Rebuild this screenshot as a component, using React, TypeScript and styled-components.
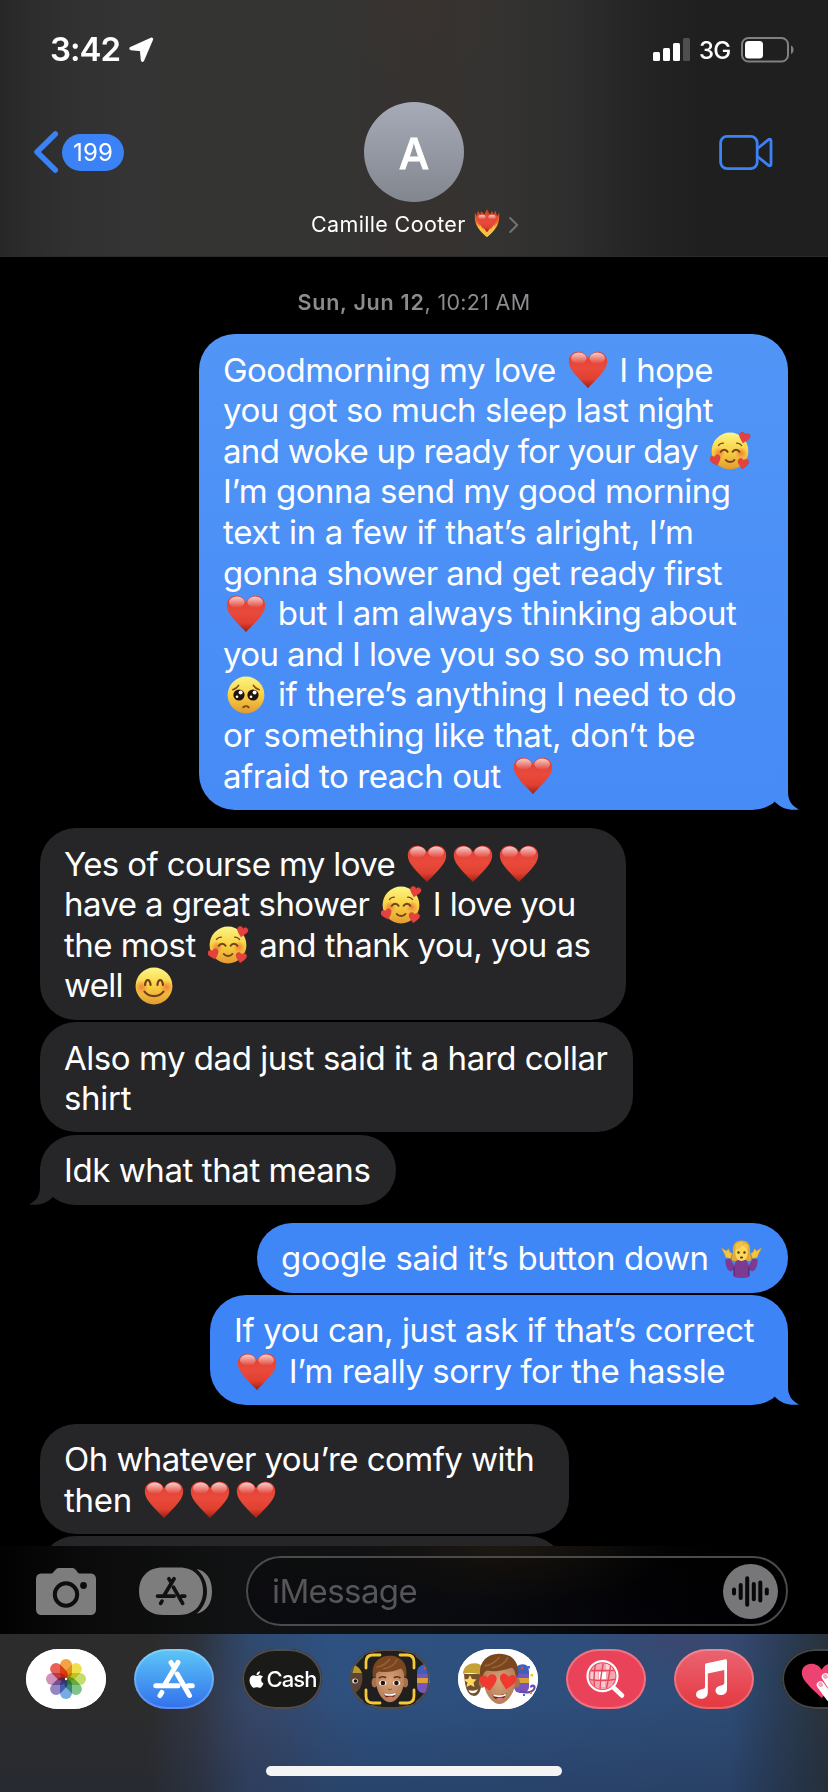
import React from 'react';
import styled, { createGlobalStyle } from 'styled-components';
import { FaApple } from 'react-icons/fa';

const GlobalStyle = createGlobalStyle`
  * { box-sizing: border-box; }
  html, body { margin: 0; padding: 0; background: #000; }
  body { font-family: Inter, "Liberation Sans", sans-serif; color: #fff; }
  svg { display: block; flex: none; }
`;

const Screen = styled.div`
  width: 828px;
  height: 1792px;
  overflow: hidden;
  display: flex;
  flex-direction: column;
  background: #000;
`;

/* ---------- header ---------- */

const Header = styled.header`
  height: 257px;
  flex: none;
  border-bottom: 1px solid #2a2a2a;
  background:
    radial-gradient(ellipse 110px 90px at 420px 0, rgba(64, 50, 46, 0.25), transparent),
    linear-gradient(90deg, #272727 0, #2c2c2c 28px, #313131 70px, #343434 130px, #343433 340px, #363230 420px, #343331 500px, #2e2e2e 570px, #242424 640px, #1f1f1f 700px, #1f1f1f 100%);
`;

const StatusBar = styled.div`
  height: 100px;
  padding: 0 34px 0 50px;
  display: flex;
  justify-content: space-between;
`;

const StatusLeft = styled.div`
  display: flex;
  padding-top: 29px;
  height: 71px;
`;

const Clock = styled.span`
  width: 79px;
  font-size: 33px;
  line-height: 41px;
  font-weight: 600;
  letter-spacing: -1px;
  white-space: nowrap;
`;

const ArrowWrap = styled.span`
  padding-top: 8px;
`;

const StatusRight = styled.div`
  display: flex;
  align-items: flex-start;
  padding-top: 37px;
`;

const Network = styled.span`
  width: 50px;
  padding-left: 8px;
  font-size: 24px;
  line-height: 27px;
  font-weight: 500;
  letter-spacing: -0.7px;
  white-space: nowrap;
`;

const NavRow = styled.div`
  height: 104px;
  padding: 0 55px 0 33px;
  display: flex;
  justify-content: space-between;
  align-items: flex-start;
`;

const Back = styled.div`
  width: 331px;
  display: flex;
  padding-top: 30px;
  gap: 3px;
`;

const Badge = styled.span`
  width: 62px;
  height: 37px;
  margin-top: 4px;
  border-radius: 19px;
  background: #3b82f7;
  font-size: 24px;
  line-height: 38px;
  letter-spacing: 0.1px;
  text-align: center;
`;

const Avatar = styled.div`
  width: 100px;
  height: 100px;
  margin-top: 2px;
  border-radius: 50%;
  background: linear-gradient(#a7abb8, #82868e);
  font-size: 43px;
  font-weight: 500;
  line-height: 103px;
  text-align: center;
  -webkit-text-stroke: 0.8px #fff;
`;

const Video = styled.div`
  width: 309px;
  display: flex;
  justify-content: flex-end;
  padding-top: 34px;
`;

const NameRow = styled.div`
  display: flex;
  justify-content: center;
  height: 44px;
  padding: 5px 0 0 2px;
`;

const Name = styled.span`
  width: 163px;
  font-size: 21.5px;
  line-height: 30px;
  letter-spacing: 0.35px;
  white-space: nowrap;
`;

const ChevronWrap = styled.span`
  padding: 8px 0 0 9px;
`;

/* ---------- conversation ---------- */

const Conversation = styled.main`
  height: 1289px;
  flex: none;
  overflow: hidden;
  display: flex;
  flex-direction: column;
  padding: 0 40px;
`;

const Stamp = styled.div`
  height: 59px;
  margin-bottom: 18px;
  padding-top: 29px;
  flex: none;
  text-align: center;
  color: #8b8b90;
  font-size: 21.5px;
  line-height: 32px;
  letter-spacing: 0.3px;
`;

const StampDay = styled.span`
  font-weight: 600;
  letter-spacing: 0.75px;
`;

type Side = 'sent' | 'received';

const Bubble = styled.div<{ $side: Side; $width: number; $gap: number; $fill: string }>`
  position: relative;
  flex: none;
  width: ${(p) => p.$width}px;
  margin-bottom: ${(p) => p.$gap}px;
  align-self: ${(p) => (p.$side === 'sent' ? 'flex-end' : 'flex-start')};
  padding: 15.7px 0 13.7px 25px;
  border-radius: 36px;
  background: ${(p) => p.$fill};
`;

const Line = styled.div<{ $tracking: number }>`
  height: 40.6px;
  font-size: 33px;
  line-height: 40.6px;
  letter-spacing: ${(p) => p.$tracking}px;
  white-space: pre;
  margin-left: -1px;
`;

const InlineEmoji = styled.span`
  display: inline-block;
  width: 46px;
  height: 38px;
  padding-left: 3px;
  vertical-align: -7.5px;
`;

const TailSvg = styled.svg<{ $side: Side }>`
  position: absolute;
  bottom: 0;
  ${(p) => (p.$side === 'sent' ? 'right: -11px;' : 'left: -11px; transform: scaleX(-1);')}
`;

/* ---------- composer ---------- */

const Composer = styled.div`
  height: 88px;
  flex: none;
  display: flex;
  align-items: flex-start;
  padding: 10px 40px 0 36px;
  background:
    radial-gradient(ellipse 160px 60px at 510px 0, rgba(40, 30, 16, 0.6), transparent),
    linear-gradient(90deg, #020202 0, #0b0b0b 90px, #111213 240px, #0e0f12 480px, #030304 640px, #000 740px);
`;

const CameraWrap = styled.div`
  padding-top: 11px;
  width: 103px;
`;

const AppsWrap = styled.div`
  padding-top: 11px;
  width: 107px;
`;

const Field = styled.div`
  flex: 1;
  height: 70px;
  border: 2px solid #4b4b4e;
  border-radius: 35px;
  display: flex;
  justify-content: space-between;
  padding: 6px 8px 0 24px;
  background: linear-gradient(rgba(0, 0, 0, 0.25), rgba(0, 2, 12, 0.4));
`;

const Placeholder = styled.span`
  font-size: 33px;
  line-height: 55px;
  letter-spacing: -0.6px;
  color: #56565a;
`;

/* ---------- app drawer ---------- */

const Drawer = styled.div`
  height: 158px;
  flex: none;
  overflow: hidden;
  display: flex;
  flex-direction: column;
  align-items: center;
  background:
    linear-gradient(180deg, transparent 40%, rgba(28, 38, 60, 0.3) 100%),
    radial-gradient(ellipse 110px 130px at 255px 110px, rgba(66, 66, 92, 0.5), transparent),
    radial-gradient(ellipse 110px 60px at 690px 0, rgba(72, 66, 100, 0.5), transparent),
    linear-gradient(90deg, #2c2c2c 0, #2c2c2c 150px, #2c333d 200px, #2e4a70 250px, #2d5181 330px, #2e4f7d 540px, #2e4c77 730px, #2a3e59 775px, #29323a 828px);
`;

const AppStrip = styled.div`
  width: 100%;
  height: 132px;
  padding: 15px 0 0 26px;
  display: flex;
  gap: 28px;
`;

const AppPill = styled.div<{ $fill: string; $edge: string }>`
  width: 80px;
  height: 60px;
  flex: none;
  overflow: hidden;
  border-radius: 33px / 30px;
  background: ${(p) => p.$fill};
  box-shadow: inset 0 0 0 2px ${(p) => p.$edge};
`;

const CashLabel = styled.div`
  height: 60px;
  display: flex;
  align-items: center;
  justify-content: center;
  font-size: 22px;
  font-weight: 500;
  letter-spacing: -0.9px;
`;

const HomeIndicator = styled.div`
  width: 296px;
  height: 10px;
  border-radius: 5px;
  background: #f4f4f4;
`;

/* ---------- emoji artwork, 40 x 38 ---------- */

const HEART = 'M20 37.2C17.5 34.2 10 27.5 5 20.8C2 16.8.8 13.6.8 10.3C.8 4.6 4.9.7 10.1.7C14.5.7 18 3 20 7.2C22 3 25.5.7 29.9.7C35.1.7 39.2 4.6 39.2 10.3C39.2 13.6 38 16.8 35 20.8C30 27.5 22.5 34.2 20 37.2Z';

const Defs = () => (
  <svg width="0" height="0" aria-hidden style={{ position: 'absolute' }}>
    <defs>
      <linearGradient id="heartFill" x1="0" y1="0" x2="0" y2="1">
        <stop offset="0" stopColor="#dd3f34" />
        <stop offset=".45" stopColor="#ea4a3b" />
        <stop offset=".75" stopColor="#e0402f" />
        <stop offset="1" stopColor="#9c1f14" />
      </linearGradient>
      <linearGradient id="heartShine" x1="0" y1="0" x2="0" y2="1">
        <stop offset="0" stopColor="#fff" stopOpacity=".75" />
        <stop offset="1" stopColor="#fff" stopOpacity="0" />
      </linearGradient>
      <linearGradient id="faceFill" x1="0" y1="0" x2="0" y2="1">
        <stop offset="0" stopColor="#fdf584" />
        <stop offset=".5" stopColor="#f9d143" />
        <stop offset="1" stopColor="#e39a30" />
      </linearGradient>
      <radialGradient id="blush">
        <stop offset="0" stopColor="#f0703a" stopOpacity=".8" />
        <stop offset="1" stopColor="#f0703a" stopOpacity="0" />
      </radialGradient>
      <linearGradient id="flame" x1="0" y1="0" x2="0" y2="1">
        <stop offset="0" stopColor="#c93a1c" />
        <stop offset=".45" stopColor="#ea6a28" />
        <stop offset=".8" stopColor="#f9b840" />
        <stop offset="1" stopColor="#fde06a" />
      </linearGradient>
      <radialGradient id="skin" cx=".5" cy=".45" r=".6">
        <stop offset="0" stopColor="#d8a27a" />
        <stop offset="1" stopColor="#b07a54" />
      </radialGradient>
    </defs>
  </svg>
);

const Heart = () => (
  <svg width="40" height="38" viewBox="0 0 40 38">
    <path d={HEART} fill="url(#heartFill)" />
    <ellipse cx="10.8" cy="7.2" rx="7.8" ry="5.6" fill="url(#heartShine)" />
    <ellipse cx="29.2" cy="7.2" rx="7.8" ry="5.6" fill="url(#heartShine)" />
  </svg>
);

const MiniHeart = ({ x, y, r }: { x: number; y: number; r: number }) => (
  <path d={HEART} fill="#e5423f" stroke="#c2302a" strokeWidth="1.2" transform={`translate(${x} ${y}) rotate(${r}) scale(.28) translate(-20 -19)`} />
);

const LovingFace = () => (
  <svg width="42" height="38" viewBox="0 0 42 38">
    <circle cx="20" cy="19" r="18.4" fill="url(#faceFill)" />
    <circle cx="9" cy="21" r="6" fill="url(#blush)" />
    <circle cx="31" cy="21" r="6" fill="url(#blush)" />
    <g fill="none" stroke="#71421a" strokeWidth="2" strokeLinecap="round">
      <path d="M10.8 19.8C12.4 17 16 17 17.6 19.8M22.6 19.8C24.2 17 27.8 17 29.4 19.8" />
      <path d="M15.8 28C17.8 30.6 22.4 30.6 24.4 28" />
      <path d="M8.5 13.4C9.6 12 11.4 11 13.2 11.2M26.8 11.2C28.6 11 30.4 12 31.5 13.4" strokeWidth="1.4" />
    </g>
    <MiniHeart x={34.2} y={6} r={14} />
    <MiniHeart x={5.6} y={28.5} r={-18} />
    <MiniHeart x={33} y={32} r={10} />
  </svg>
);

const PleadingFace = () => (
  <svg width="40" height="38" viewBox="0 0 40 38">
    <circle cx="20" cy="19" r="18.4" fill="url(#faceFill)" />
    <g fill="none" stroke="#7b4a1c" strokeWidth="1.6" strokeLinecap="round">
      <path d="M6.8 13.8C9.2 13 11.4 11.4 12.6 9.4M33.2 13.8C30.8 13 28.6 11.4 27.4 9.4" />
      <path d="M17.3 31.3C18.8 29.8 21.2 29.8 22.7 31.3" strokeWidth="2" />
    </g>
    <circle cx="13" cy="19" r="5.6" fill="#20130d" />
    <circle cx="27" cy="19" r="5.6" fill="#20130d" />
    <g fill="#fff">
      <circle cx="14.6" cy="16.6" r="2" />
      <circle cx="11" cy="20.8" r="1.3" />
      <circle cx="28.6" cy="16.6" r="2" />
      <circle cx="25" cy="20.8" r="1.3" />
    </g>
  </svg>
);

const SmileFace = () => (
  <svg width="40" height="38" viewBox="0 0 40 38">
    <circle cx="20" cy="19" r="18.4" fill="url(#faceFill)" />
    <circle cx="7.5" cy="20" r="7" fill="url(#blush)" />
    <circle cx="32.5" cy="20" r="7" fill="url(#blush)" />
    <g fill="none" stroke="#71421a" strokeWidth="2.2" strokeLinecap="round">
      <path d="M11 18C11.8 11.4 15.8 11.4 16.6 18M23.4 18C24.2 11.4 28.2 11.4 29 18" />
      <path d="M10.5 24.6C15 30.5 25 30.5 29.5 24.6" />
    </g>
  </svg>
);

const Shrug = () => (
  <svg width="41" height="38" viewBox="0 0 44 38" preserveAspectRatio="none">
    <path d="M4.5 19.5L10 18.5L14 25.5L17 19.5H27L30 25.5L34 18.5L39.500 19.5C39 26 37.5 30.5 33.5 31.5L30 29.5V37C25 38.5 19 38.5 14 37V29.5L10.5 31.5C6.5 30.5 5 26 4.5 19.5Z" fill="#7d3a93" />
    <path d="M14 36V27M30 36V27" stroke="#572569" strokeWidth="1.2" />
    <path d="M.5 8L6 11L8 8.5L9.5 12L12 13.5L10.5 18.5L5 17.5C4.500 14 2 11.5 .5 8ZM43.5 8L38 11L36 8.5L34.5 12L32 13.5L33.5 18.5L39 17.5C39.5 14 42 11.5 43.5 8Z" fill="#f5c63c" stroke="#c98d25" strokeWidth=".5" />
    <path d="M22 .5C15 .5 12.500 5 12.800 10.500C12.800 15 10.800 17.500 11.500 20C13 22 17 21 18 20H27C29 22 32 21 32.500 19.500C33 17 31 15 31.200 10.500C31.500 5 29 .5 22 .5Z" fill="#e3a933" />
    <path d="M22 4.500C17.500 7 15.500 8.500 15.300 12C15.500 17.500 18 21 22 21S28.500 17.500 28.700 12C28.500 8.500 26.500 6 22 4.500Z" fill="#fbd75b" />
    <path d="M15.500 10C20 9 23 6.500 23.500 3.500C25 7 27 9 29 10L29 5L22 1.500L15.500 4Z" fill="#f2c249" />
    <g fill="#51301a">
      <circle cx="18.8" cy="12.5" r="1.300" />
      <circle cx="25.2" cy="12.500" r="1.300" />
      <ellipse cx="22" cy="17.500" rx="1.700" ry="1.100" />
    </g>
  </svg>
);

const HeartOnFire = () => (
  <svg width="26" height="28" viewBox="0 0 26 28">
    <path d="M13 28C8 24 2.500 18.500 1.200 12.500C.4 9 1.300 7.500 .6 4C2 5 2.300 6 2.800 7C3.600 5.500 2.800 3.500 4.200 1.500C4.700 3.500 5.500 4.500 6.200 5.200C7 4.500 6.500 3 7.200 2C8 3.500 9.500 4 10.200 5.500C11.500 4 11.500 2 13.200 0C13.500 2.200 15 3.500 15.800 5.500C17 4.500 17.200 3 17.800 2C18.800 3 18.800 4.200 19.500 5.200C20.500 4.500 20.500 3 21.300 1.500C22.500 3.500 22.200 5.500 23.200 7C24 6 24.300 5 25.500 4C24.800 7.500 25.600 9 24.800 12.500C23.500 18.500 18 24 13 28Z" fill="url(#flame)" />
    <path d={HEART} fill="url(#heartFill)" transform="translate(2.600 4.600) scale(.52 .5)" />
    <ellipse cx="8" cy="8.200" rx="3.600" ry="2.400" fill="url(#heartShine)" />
    <ellipse cx="18" cy="8.200" rx="3.600" ry="2.400" fill="url(#heartShine)" />
    <path d="M13 28C9 24.500 4.500 20.500 2.500 14C4 15.500 4.600 16.800 5.200 18.200C5.800 17.500 5.900 16.700 6 16C7.500 17.800 8.300 19.500 8.800 21.200L9.800 19.200C11 20.500 11.700 22.500 13 24.300C14.300 22.500 15 20.500 16.200 19.200L17.200 21.200C17.700 19.500 18.500 17.800 20 16C20.100 16.700 20.200 17.500 20.800 18.200C21.400 16.800 22 15.500 23.500 14C21.500 20.500 17 24.500 13 28Z" fill="#f8c043" />
  </svg>
);

const EMOJI: Record<string, React.FC> = {
  '❤': Heart,
  '🥰': LovingFace,
  '🥺': PleadingFace,
  '😊': SmileFace,
  '🤷': Shrug,
};

const RichText = ({ text }: { text: string }) => (
  <>
    {text.split(/(❤|🥰|🥺|😊|🤷)/u).map((part, i) => {
      const Art = EMOJI[part];
      return Art ? (
        <InlineEmoji key={i} role="img">
          <Art />
        </InlineEmoji>
      ) : (
        <React.Fragment key={i}>{part}</React.Fragment>
      );
    })}
  </>
);

/* ---------- messages ---------- */

interface Message {
  side: Side;
  width: number;
  gap: number;
  fill: string;
  tail?: boolean;
  tailFill?: string;
  lines: [string, number][];
}

const GRAY = '#262628';

const messages: Message[] = [
  {
    side: 'sent', width: 589, gap: 18, tail: true, fill: 'linear-gradient(#5195f7, #468bf6)', tailFill: '#478cf6',
    lines: [
      ['Goodmorning my love ❤ I hope', -0.54],
      ['you got so much sleep last night', -0.45],
      ['and woke up ready for your day 🥰', -0.67],
      ['I’m gonna send my good morning', -0.48],
      ['text in a few if that’s alright, I’m', -0.34],
      ['gonna shower and get ready first', -0.54],
      ['❤ but I am always thinking about', -0.49],
      ['you and I love you so so so much', -0.61],
      ['🥺 if there’s anything I need to do', -0.4],
      ['or something like that, don’t be', -0.3],
      ['afraid to reach out ❤', -0.45],
    ],
  },
  {
    side: 'received', width: 586, gap: 2.2, fill: GRAY,
    lines: [
      ['Yes of course my love ❤❤❤', -0.62],
      ['have a great shower 🥰 I love you', -0.58],
      ['the most 🥰 and thank you, you as', -0.5],
      ['well 😊', -0.7],
    ],
  },
  {
    side: 'received', width: 593, gap: 2.2, fill: GRAY,
    lines: [['Also my dad just said it a hard collar', -0.46], ['shirt', -0.3]],
  },
  { side: 'received', width: 356, gap: 18, fill: GRAY, tail: true, lines: [['Idk what that means', -0.42]] },
  { side: 'sent', width: 531, gap: 2.2, fill: '#3f86f7', lines: [['google said it’s button down 🤷', -0.3]] },
  {
    side: 'sent', width: 578, gap: 18.4, fill: '#3d84f7', tail: true,
    lines: [['If you can, just ask if that’s correct', -0.4], ['❤ I’m really sorry for the hassle', -0.49]],
  },
  {
    side: 'received', width: 529, gap: 2.2, fill: GRAY,
    lines: [['Oh whatever you’re comfy with', -0.54], ['then ❤❤❤', -0.3]],
  },
  { side: 'received', width: 524, gap: 0, fill: GRAY, lines: [['', 0]] },
];

const Tail = ({ side, fill }: { side: Side; fill: string }) => (
  <TailSvg $side={side} width="24" height="38" viewBox="0 0 24 38">
    <path d="M13 0V20C13 28 16.5 34 24 37.400C14.500 38.800 6.500 36.500 0 30L4 0Z" fill={fill} />
  </TailSvg>
);

/* ---------- icons ---------- */

const AppStoreMark = ({ color }: { color: string }) => (
  <g stroke={color} strokeWidth="5" strokeLinecap="round" fill="none">
    <path d="M44 13.500L30.500 36M27.800 43.500L26 46.500M37 13.500L39.500 17.500M43.200 25L55.500 46.500M21.800 36.700H44M54 36.700H58.300" />
  </g>
);

const Petals = () => {
  const colors = ['#f29a38', '#efdf3c', '#bfdb62', '#74bf83', '#6aa5e0', '#8a7cc0', '#cb8ab6', '#e6534a'];
  return (
    <svg width="80" height="60" viewBox="0 0 80 60">
      <g style={{ isolation: 'isolate' }}>
        {colors.map((c, i) => (
          <rect key={c} x="34" y="10" width="12" height="20" rx="6" fill={c} opacity=".92" transform={`rotate(${i * 45} 40 30)`} style={{ mixBlendMode: 'multiply' }} />
        ))}
      </g>
      <circle cx="40" cy="30" r="1.200" fill="#fff" />
    </svg>
  );
};

const BoyHead = ({ love }: { love?: boolean }) => (
  <g>
    <ellipse cx="24" cy="32" rx="3" ry="5" fill="#a8714c" />
    <ellipse cx="56" cy="32" rx="3" ry="5" fill="#a8714c" />
    <path d="M25 20C25 10 55 10 55 22C55.500 36 53 43 47 49C42 53.500 38 53.500 33 49C27 43 24.500 34 25 20Z" fill="url(#skin)" />
    <path d="M22.500 27C20 14 27 5 39 4.500C51 4 59.500 12 57 27C56 25.500 55 25 54.800 24C54.500 21 53.500 19 51.500 17.500C43 21 36 22 28.500 20.500C26 21.500 25.200 23.500 24.800 26Z" fill="#79461f" />
    <path d="M26 16C32 16 38 11 40 7.500M33 18C41 17 46 12 48 8" stroke="#9c6136" strokeWidth="1.600" fill="none" />
    {love ? (
      <g fill="#f0392f">
        <path d={HEART} transform="translate(20.500 25.500) rotate(-8) scale(.42)" />
        <path d={HEART} transform="translate(41 22.500) rotate(10) scale(.4)" />
      </g>
    ) : (
      <g>
        <ellipse cx="32.500" cy="32.500" rx="3.800" ry="2.600" fill="#fff" />
        <ellipse cx="47" cy="32.500" rx="3.800" ry="2.600" fill="#fff" />
        <circle cx="32.700" cy="32.500" r="2.400" fill="#2a1510" />
        <circle cx="46.800" cy="32.500" r="2.400" fill="#2a1510" />
        <path d="M28.500 27.500C31 25.500 34 26 36 27M44 27C46 26 49 25.500 51 27.500" stroke="#5d3018" strokeWidth="1.700" fill="none" />
        <path d="M38 38.500C39 39.500 41 39.500 42 38.500" stroke="#965b3a" strokeWidth="1.300" fill="none" />
      </g>
    )}
    <path d="M33.500 43C37 44.500 43 44.500 46.500 42C45.500 50 35 50.500 33.500 43Z" fill="#6c2019" />
    <path d="M34 43C37.500 44.500 43 44.500 46.200 42.300L45.700 44.500C42 46 38 46 34.800 45Z" fill="#fff" />
    <path d="M36.500 47.500C39 46 42 46 44 47C42 49.500 38.500 49.500 36.500 47.500Z" fill="#d97872" />
  </g>
);

const BlueHatFriend = ({ dx }: { dx: number }) => (
  <g transform={`translate(${dx} 0)`}>
    <rect x="56" y="18" width="15" height="26" rx="6" fill="#7655bd" />
    <path d="M56 24C56 14 69 13 70.500 19L71 25H56Z" fill="#3b62b8" />
    <circle cx="64" cy="19" r="1.500" fill="#d8453d" />
    <rect x="56" y="29" width="15" height="5" fill="#dba236" />
  </g>
);

const MemojiCapture = () => (
  <svg width="80" height="60" viewBox="0 0 80 60">
    <path d="M-4 24C-2 16 7 12 12 24Z" fill="#b59a2f" />
    <path d="M-4 24H12C14 35 9 43 4 44H-4Z" fill="#5e4337" />
    <ellipse cx="5" cy="32" rx="3" ry="2.500" fill="#e4dcd3" />
    <circle cx="5.500" cy="32" r="1.800" fill="#20120e" />
    <BlueHatFriend dx={11} />
    <rect x="13.500" y="4" width="52" height="52" fill="#201f1e" />
    <g transform="translate(1.500 2.500) scale(.96 .97)">
      <BoyHead />
    </g>
    <path d="M16 19V13C16 8.500 18.500 6 23 6H30M50 6H57C61.500 6 64 8.500 64 13V19M64 41V47C64 51.500 61.500 54 57 54H50M30 54H23C18.500 54 16 51.500 16 47V41" fill="none" stroke="#f5c83a" strokeWidth="2.800" strokeLinecap="round" />
    <path d="M33 1H47C67 1 79 12 79 30S67 59 47 59H33C13 59 1 48 1 30S13 1 33 1Z" fill="none" stroke="#504d4a" strokeWidth="2" />
  </svg>
);

const MemojiStickers = () => (
  <svg width="80" height="60" viewBox="0 0 80 60">
    <path d="M6 25C7 36 8 46 16 47C23 47 24 35 24 25Z" fill="#74502f" />
    <path d="M5 25C5 12 22 12 24 18V26C18 24 10 23 5 25Z" fill="#c5a136" />
    <path d="M12 26L14 30L18.500 30.500L15.500 33.500L16.500 38L12.500 36L8.500 38L9.500 33.500L5 30.500L10 30Z" fill="#ffd95e" />
    <path d="M10.500 41C13 42 18 42 20 40C19 45 12 46 10.500 41Z" fill="#fff" />
    <BlueHatFriend dx={0} />
    <path d="M62 42C68 45 76 43 76.500 38.500C76.500 36 73 36 73 38.500" stroke="#6d48b2" strokeWidth="2.200" fill="none" />
    <g fill="#3571d8">
      <rect x="69.500" y="17" width="2.500" height="2.500" />
      <rect x="65" y="45" width="2" height="2" />
    </g>
    <rect x="72.500" y="25" width="2.500" height="2.500" fill="#f0c530" />
    <rect x="72" y="43" width="2" height="2" fill="#e98a36" />
    <g transform="translate(-1.800 0) scale(1.080 1.050)">
      <BoyHead love />
    </g>
  </svg>
);

const ImageSearch = () => (
  <svg width="80" height="60" viewBox="0 0 80 60">
    <defs>
      <clipPath id="lens">
        <circle cx="36.500" cy="27.200" r="13" />
      </clipPath>
    </defs>
    <g clipPath="url(#lens)">
      <rect x="22" y="12" width="30" height="30" fill="#f4a6b3" />
      <rect x="25" y="23" width="7" height="7" fill="#f9ccd3" />
      <rect x="33" y="23" width="7" height="7" fill="#fff" />
      <rect x="40" y="15" width="6" height="7" fill="#fbd7dc" />
      <rect x="33" y="31" width="6" height="7" fill="#f9ccd3" />
      <path d="M30 13C27.500 23 27.500 32 29 42M37.500 13C35.500 23 34 32 34 42M45 13C44 23 42 32 40 42M22 21.500H51M22 30.500C32 32 42 32 51 30" stroke="#eb455a" strokeWidth="1.400" fill="none" />
    </g>
    <circle cx="36.500" cy="27.200" r="15" fill="none" stroke="#fff" strokeWidth="2.200" />
    <path d="M47.500 38.500L56 46.500" stroke="#fff" strokeWidth="4.500" strokeLinecap="round" />
  </svg>
);

const MusicNote = () => (
  <svg width="80" height="60" viewBox="0 0 80 60">
    <path d="M31 16.500C31 15.200 31.500 14.600 32.800 14.300L50.500 10.400C52 10.100 53 10.600 53 12V40C53 44 50.500 46 46.500 46C43.500 46 41.500 44 41.500 41.500C41.500 39 43.500 37 47 36.500C49.500 36 50.300 35.500 50.300 33.500V21L33.800 24.500V43.500C33.800 47.500 31 49.800 27 49.800C24 49.800 22 48 22 45.500C22 43 24 41 27 40.500C30 40 31 39.500 31 37.500Z" fill="#fff" />
  </svg>
);

const TouchHeart = () => (
  <svg width="80" height="60" viewBox="0 0 80 60">
    <path d={HEART} fill="#ec4372" transform="translate(19 14) scale(1.030 .940)" />
    <path d="M38.500 36L48 49M43.500 28L54 44" stroke="#fff" strokeWidth="7.500" strokeLinecap="round" />
    <ellipse cx="38.600" cy="35.500" rx="2.200" ry="2.700" fill="#f3a6bc" transform="rotate(-35 38.600 35.500)" />
    <ellipse cx="43.400" cy="27.400" rx="2.200" ry="2.700" fill="#f3a6bc" transform="rotate(-35 43.400 27.400)" />
  </svg>
);

export default function App() {
  return (
    <Screen>
      <GlobalStyle />
      <Defs />
      <Header>
        <StatusBar>
          <StatusLeft>
            <Clock>3:42</Clock>
            <ArrowWrap>
              <svg width="25" height="26" viewBox="0 0 25 26">
                <path d="M2 11.500L22.500 2.200L13.500 23.200L12.500 12.500Z" fill="#fff" stroke="#fff" strokeWidth="3.400" strokeLinejoin="round" />
              </svg>
            </ArrowWrap>
          </StatusLeft>
          <StatusRight>
            <svg width="38" height="26" viewBox="0 0 38 26">
              <g fill="#fff">
                <rect x="0" y="15" width="7" height="9" rx="1.500" />
                <rect x="10" y="11" width="7" height="13" rx="1.500" />
                <rect x="20" y="6" width="7" height="18" rx="1.500" />
              </g>
              <rect x="30" y="1" width="7" height="23" rx="1.500" fill="#4f4f4f" />
            </svg>
            <Network>3G</Network>
            <svg width="53" height="26" viewBox="0 0 53 26">
              <rect x="1" y="1" width="46" height="23.500" rx="6.500" fill="none" stroke="#808080" strokeWidth="2" />
              <rect x="4" y="4" width="18" height="17.500" rx="3.500" fill="#fff" />
              <path d="M50 8.500C53.500 10 53.500 15.500 50 17Z" fill="#808080" />
            </svg>
          </StatusRight>
        </StatusBar>
        <NavRow>
          <Back>
            <svg width="26" height="44" viewBox="0 0 26 44">
              <path d="M22.300 4L4 22L22.300 40" fill="none" stroke="#3b82f7" strokeWidth="5.500" strokeLinecap="round" strokeLinejoin="round" />
            </svg>
            <Badge>199</Badge>
          </Back>
          <Avatar>A</Avatar>
          <Video>
            <svg width="54" height="38" viewBox="0 0 54 38">
              <g fill="none" stroke="#3b82f7" strokeWidth="2.800" strokeLinejoin="round">
                <rect x="1.600" y="2.400" width="36.600" height="32.200" rx="6.500" />
                <path d="M38.500 14.500L49 6C51 4.600 52 5 52 7V30C52 32 51 32.400 49 31L38.500 22.500" />
              </g>
            </svg>
          </Video>
        </NavRow>
        <NameRow>
          <Name>Camille Cooter</Name>
          <HeartOnFire />
          <ChevronWrap>
            <svg width="10" height="16" viewBox="0 0 10 16">
              <path d="M1.200 1L8.200 8L1.200 15" fill="none" stroke="#727274" strokeWidth="2" strokeLinecap="round" strokeLinejoin="round" />
            </svg>
          </ChevronWrap>
        </NameRow>
      </Header>

      <Conversation>
        <Stamp>
          <StampDay>Sun, Jun 12</StampDay>, 10:21 AM
        </Stamp>
        {messages.map((m, i) => (
          <Bubble key={i} $side={m.side} $width={m.width} $gap={m.gap} $fill={m.fill}>
            {m.lines.map(([text, tracking], j) => (
              <Line key={j} $tracking={tracking}>
                <RichText text={text} />
              </Line>
            ))}
            {m.tail && <Tail side={m.side} fill={m.tailFill ?? m.fill} />}
          </Bubble>
        ))}
      </Conversation>

      <Composer>
        <CameraWrap>
          <svg width="60" height="48" viewBox="0 0 60 48">
            <path d="M6 6.500H15C17 6.500 18 4 20 2.200C21.300 1.200 22.500 1 24 1H35C37 1 38.300 1.300 39.500 2.400C41 4 42 6.500 44 6.500H54C58 6.500 60 8.500 60 12.500V42C60 46 58 48 54 48H6C2 48 0 46 0 42V12.500C0 8.500 2 6.500 6 6.500Z" fill="#7d7d7e" />
            <circle cx="30" cy="27.500" r="11.200" fill="none" stroke="#0d0d0d" strokeWidth="4" />
            <circle cx="47.500" cy="18.500" r="3.400" fill="#0d0d0d" />
          </svg>
        </CameraWrap>
        <AppsWrap>
          <svg width="74" height="48" viewBox="0 0 74 48">
            <path d="M57.500 2C67.500 4 73 12 73 24.300S67.500 44.500 57.500 46.800C63.500 42 68 34 68 24.300S63.500 7 57.500 2Z" fill="#7d7d7e" />
            <path d="M24 .5H40C56 .5 64 11 64 24S56 48 40 48H24C8 48 0 37 0 24S8 .5 24 .5Z" fill="#7d7d7e" />
            <g transform="translate(2.300 1.700) scale(.745)">
              <AppStoreMark color="#111" />
            </g>
          </svg>
        </AppsWrap>
        <Field>
          <Placeholder>iMessage</Placeholder>
          <svg width="55" height="55" viewBox="0 0 55 55">
            <circle cx="27.500" cy="27.500" r="27.500" fill="#777779" />
            <path d="M11 25.500V29.500M17.700 21V34M24.200 14.300V40.700M30.800 20V35.200M37.300 18.500V36.500M43.800 25.500V29.500" stroke="#08080a" strokeWidth="4" strokeLinecap="round" />
          </svg>
        </Field>
      </Composer>

      <Drawer>
        <AppStrip>
          <AppPill $fill="#fff" $edge="#fff">
            <Petals />
          </AppPill>
          <AppPill $fill="linear-gradient(#5dc7f8, #3170ec)" $edge="rgba(255,255,255,.2)">
            <svg width="80" height="60" viewBox="0 0 80 60">
              <AppStoreMark color="#fff" />
            </svg>
          </AppPill>
          <AppPill $fill="#1a1a19" $edge="#504d4a">
            <CashLabel>
              <FaApple size={19} />
              <span>Cash</span>
            </CashLabel>
          </AppPill>
          <AppPill $fill="#201f1e" $edge="#504d4a">
            <MemojiCapture />
          </AppPill>
          <AppPill $fill="#fff" $edge="#fff">
            <MemojiStickers />
          </AppPill>
          <AppPill $fill="#ea4359" $edge="rgba(255,255,255,.25)">
            <ImageSearch />
          </AppPill>
          <AppPill $fill="linear-gradient(#ea6473, #e5383f)" $edge="rgba(255,255,255,.22)">
            <MusicNote />
          </AppPill>
          <AppPill $fill="#000" $edge="#454545">
            <TouchHeart />
          </AppPill>
        </AppStrip>
        <HomeIndicator />
      </Drawer>
    </Screen>
  );
}
